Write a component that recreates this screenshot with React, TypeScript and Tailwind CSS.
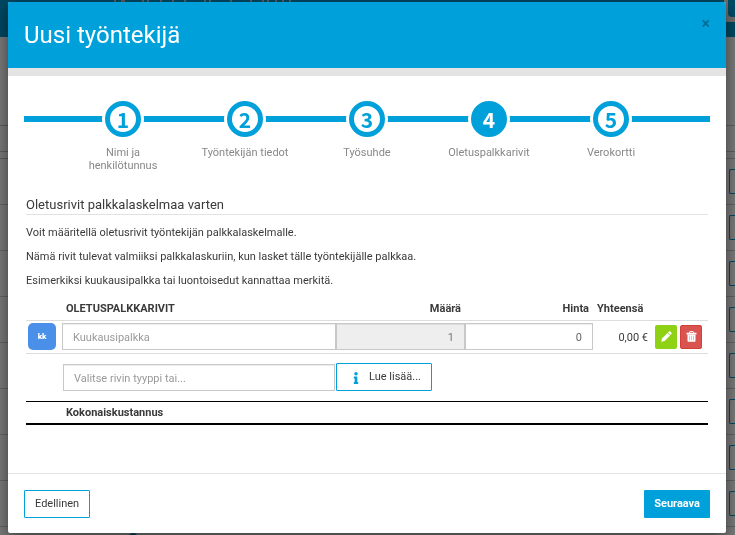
import { useState } from "react";
import { FaInfo } from "react-icons/fa";
import clsx from "clsx";

const STEPS = [
  "Nimi ja henkilötunnus",
  "Työntekijän tiedot",
  "Työsuhde",
  "Oletuspalkkarivit",
  "Verokortti",
];

const INTRO = [
  "Voit määritellä oletusrivit työntekijän palkkalaskelmalle.",
  "Nämä rivit tulevat valmiiksi palkkalaskuriin, kun lasket tälle työntekijälle palkkaa.",
  "Esimerkiksi kuukausipalkka tai luontoisedut kannattaa merkitä.",
];

const TITLE_MARKS = [14, 21, 23, 42, 47, 60, 72, 84, 104, 109, 130, 150, 162, 167, 175, 182, 189];

const inputClass =
  "block h-[27px] w-full border border-[#c8c8c8] px-2.5 pt-px text-[11px] shadow-[inset_0_1px_1px_rgba(0,0,0,0.075)] outline-none placeholder:text-[#9a9a9a]";

function PencilIcon() {
  return (
    <svg viewBox="0 0 11 11" className="size-[11px]" fill="currentColor" aria-hidden="true">
      <path d="M7.900.6c.4-.4 1-.4 1.400 0l1.100 1.100c.4.4.4 1 0 1.400l-.9.9L7 1.500z" />
      <path d="M6.500 1.900 9.100 4.500 3.600 10 .3 10.700 1 7.400z" />
    </svg>
  );
}

function TrashIcon() {
  return (
    <svg viewBox="0 0 11 11" className="size-[11px]" fill="none" aria-hidden="true">
      <path d="M3.500 2V1.200c0-.4.3-.7.7-.7h2.600c.4 0 .7.3.7.7V2" stroke="currentColor" />
      <path d="M.5 1.700h10v1.800H.5z" fill="currentColor" />
      <path d="M1.500 3.500h8v6.200c0 .6-.4 1-1 1h-6c-.6 0-1-.4-1-1z" fill="currentColor" />
      <path d="M3.500 4.800v4.500M5.500 4.800v4.500M7.500 4.800v4.500" stroke="#d9534f" strokeWidth=".4" />
    </svg>
  );
}

function PageBehind() {
  return (
    <div className="fixed inset-0 overflow-hidden bg-[#f2f2f2]" aria-hidden="true">
      <div className="flex h-[37px] items-start justify-between bg-[#0090c5]">
        <svg width="195" height="2" className="ml-[100px]" fill="#e8c8b8" fillOpacity=".75">
          {TITLE_MARKS.map((x) => (
            <rect key={x} x={x} width="2" height="2" />
          ))}
        </svg>
        <div className="h-[22px] w-[11px] bg-[#e4dcd8] pl-1">
          <div className="h-[17px] w-10 rounded-bl-sm bg-[#0098d0]" />
        </div>
      </div>
      <div className="h-[89px] border-b border-[#bbb]" />
      <div className="h-[26px] border-b border-[#bbb]" />
      <div className="h-[7px] border-b border-[#bbb]" />
      {[1, 2, 3, 4, 5, 6, 7, 8].map((n) => (
        <div key={n} className="flex h-[46px] justify-end border-b border-[#c4c4c4] pt-2.5">
          <div className="h-[25px] w-1.5 rounded-l-xs border border-r-0 border-[#0090c5]" />
        </div>
      ))}
      <div className="absolute -bottom-2 left-32 size-2.5 rounded-full bg-[#0090c5]" />
    </div>
  );
}

function Steps({ current }: { current: number }) {
  return (
    <div className="relative mx-4 px-[38px] pt-[25px]">
      <div className="absolute inset-x-0 top-10 h-1.5 bg-[#00a0da]" />
      <ol className="relative grid grid-cols-5">
        {STEPS.map((label, i) => (
          <li
            key={label}
            className="flex flex-col items-center text-center text-[11px] leading-[13px] text-[#888]"
          >
            <span className="-mt-[3px] rounded-full bg-white p-[3px]">
              <span
                className={clsx(
                  "grid size-9 place-items-center rounded-full border-5 border-[#00a0da] font-['Noto_Sans_CJK_SC','Roboto',sans-serif] text-[21px] leading-none font-bold",
                  i + 1 === current ? "bg-[#00a0da] text-white" : "bg-white text-[#00a0da]"
                )}
              >
                {i + 1}
              </span>
            </span>
            <span className="mt-1.5 w-20 whitespace-nowrap">
              <span className={clsx("block", i === 0 ? "whitespace-normal" : "-mx-4")}>{label}</span>
            </span>
          </li>
        ))}
      </ol>
    </div>
  );
}

function RowsTable() {
  const [name, setName] = useState("");
  const [price, setPrice] = useState("0");
  const [type, setType] = useState("");

  return (
    <table className="w-full table-fixed border-collapse text-[11px]">
      <colgroup>
        <col className="w-9" />
        <col />
        <col className="w-[129px]" />
        <col className="w-32" />
        <col className="w-[62px]" />
        <col className="w-[53px]" />
      </colgroup>
      <thead>
        <tr className="h-[23px] border-b border-[#ddd]">
          <th />
          <th className="pt-px pl-1 text-left">OLETUSPALKKARIVIT</th>
          <th className="pt-px pr-1 text-right">Määrä</th>
          <th className="pt-px pr-1 text-right">Hinta</th>
          <th className="pt-px pl-1 text-left">Yhteensä</th>
          <th />
        </tr>
      </thead>
      <tbody>
        <tr className="h-[33px] border-b border-[#ddd]">
          <td className="pl-0.5">
            <span className="grid h-[27px] w-7 place-items-center rounded-[5px] bg-[#4a90e8] text-[8px] font-black text-white">
              kk
            </span>
          </td>
          <td>
            <input
              className={inputClass}
              aria-label="Oletuspalkkarivi"
              placeholder="Kuukausipalkka"
              value={name}
              onChange={(e) => setName(e.target.value)}
            />
          </td>
          <td>
            <input
              className={clsx(inputClass, "bg-[#eee] text-right text-[#777]")}
              aria-label="Määrä"
              value="1"
              readOnly
            />
          </td>
          <td>
            <input
              className={clsx(inputClass, "text-right text-[#666]")}
              aria-label="Hinta"
              value={price}
              onChange={(e) => setPrice(e.target.value)}
            />
          </td>
          <td className="pt-1 pr-[7px] text-right">0,00 €</td>
          <td>
            <div className="flex gap-[3px]">
              <button
                aria-label="Muokkaa"
                className="grid h-6 w-[22px] place-items-center rounded-xs bg-[#8fd114] text-white"
              >
                <PencilIcon />
              </button>
              <button
                aria-label="Poista"
                className="grid h-6 w-[22px] place-items-center rounded-xs border border-[#d43f3a] bg-[#d9534f] text-white"
              >
                <TrashIcon />
              </button>
            </div>
          </td>
        </tr>
        <tr className="h-12">
          <td />
          <td colSpan={5}>
            <div className="flex items-end pl-px">
              <div className="w-[272px]">
                <input
                  className={inputClass}
                  aria-label="Rivin tyyppi"
                  placeholder="Valitse rivin tyyppi tai..."
                  value={type}
                  onChange={(e) => setType(e.target.value)}
                />
              </div>
              <button className="ml-px flex h-7 w-24 items-center rounded-[1px] border border-[#00a0da] pt-px pl-4">
                <FaInfo className="mr-2.5 h-3 w-1.5 text-[#00a0da]" />
                Lue lisää...
              </button>
            </div>
          </td>
        </tr>
      </tbody>
      <tfoot>
        <tr className="h-[23px] border-t border-b-2 border-black">
          <td />
          <th colSpan={5} className="pt-0.5 pl-1 text-left">
            Kokonaiskustannus
          </th>
        </tr>
      </tfoot>
    </table>
  );
}

export default function App() {
  return (
    <div className="min-h-screen font-['Roboto',sans-serif] text-[#3a3a3a]">
      <PageBehind />
      <div className="fixed inset-0 bg-black/50" />

      <div
        role="dialog"
        aria-labelledby="dialog-title"
        className="relative top-0.5 mr-[9px] ml-2 rounded-xs bg-white shadow-[0_5px_15px_rgba(0,0,0,0.5)]"
      >
        <header className="flex items-start justify-between rounded-t-xs border-b-8 border-[#e4e4e4] bg-[#00a0da] px-4 pb-[17px]">
          <h1 id="dialog-title" className="pt-[17px] text-2xl text-white">
            Uusi työntekijä
          </h1>
          <button aria-label="Sulje" className="pt-3.5 text-base leading-4 font-bold text-black/30">
            ×
          </button>
        </header>

        <Steps current={4} />

        <main className="px-[18px] pt-[23px]">
          <h2 className="border-b border-[#e2e2e2] pt-px text-[13px] leading-[18px]">
            Oletusrivit palkkalaskelmaa varten
          </h2>
          <div className="mt-1.5 mb-1 text-[11px] leading-6">
            {INTRO.map((text) => (
              <p key={text}>{text}</p>
            ))}
          </div>
          <RowsTable />
        </main>

        <footer className="mt-12 flex justify-between border-t border-[#e4e4e4] p-4 pb-[15px] text-[11px]">
          <button className="h-7 rounded-[1px] border border-[#00a0da] px-2.5 pt-px">
            Edellinen
          </button>
          <button className="h-7 rounded-[1px] bg-[#00a0da] px-2.5 pt-px font-bold text-white">
            Seuraava
          </button>
        </footer>
      </div>
    </div>
  );
}
